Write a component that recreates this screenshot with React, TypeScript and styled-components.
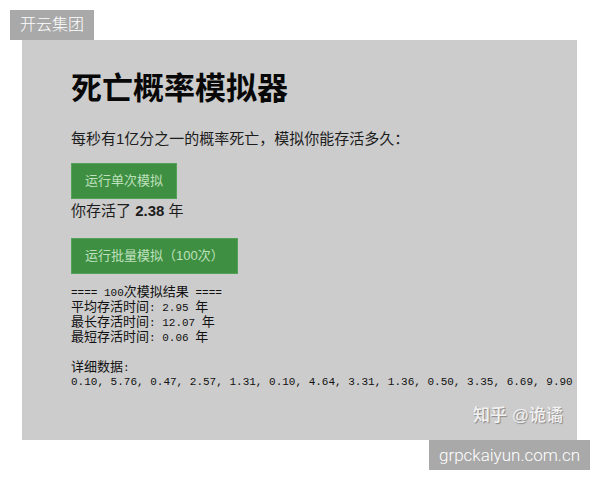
import React from "react";
import styled, { createGlobalStyle } from "styled-components";

const GlobalStyle = createGlobalStyle`
  * { box-sizing: border-box; }
  body {
    margin: 0;
    background: #fff;
    font-family: "Liberation Sans", "Noto Sans CJK SC", sans-serif;
  }
`;

const Page = styled.div`
  position: relative;
  min-height: 100vh;
  padding: 40px 23px 40px 22px;
`;

const Panel = styled.main`
  display: flex;
  flex-direction: column;
  align-items: flex-start;
  padding: 27px 0 12px 49px;
  overflow: hidden;
  background: #ccc;
  color: #1c1c1c;
`;

const Title = styled.h1`
  margin: 0 0 16px;
  color: #080808;
  font-size: 31px;
  line-height: 44px;
`;

const Text = styled.p<{ $gap: number }>`
  margin: 0 0 ${({ $gap }) => $gap}px;
  font-size: 15px;
  line-height: 24px;
`;

const RunButton = styled.button`
  padding: 0 13px;
  border: 1px solid #54a158;
  background: #3e8f42;
  color: #bfe0bd;
  font-family: inherit;
  font-size: 13px;
  line-height: 34px;
  cursor: pointer;
`;

const Report = styled.pre`
  align-self: stretch;
  margin: 11px 0 14px;
  overflow: hidden;
  color: #111;
  font-family: "Liberation Mono", "Noto Sans CJK SC", monospace;
  font-size: 11px;
`;

const Line = styled.div`
  height: 15px;
  line-height: 15px;
`;

const Han = styled.span`
  font-size: 13px;
`;

const Credit = styled.footer`
  align-self: flex-end;
  margin-right: 14px;
  color: #f2f2f2;
  font-size: 17px;
  font-weight: 500;
  line-height: 24px;
  text-shadow: 1px 1px 1px #888;
`;

const Tag = styled.div`
  position: absolute;
  padding: 0 10px;
  background: #a9a9a9;
  color: #fff;
  font-family: Roboto, "Noto Sans CJK SC", sans-serif;
  font-weight: 300;
  line-height: 30px;
`;

const BrandTag = styled(Tag)`
  top: 10px;
  left: 10px;
  font-size: 16px;
`;

const SiteTag = styled(Tag)`
  right: 10px;
  bottom: 10px;
  font-size: 17px;
`;

const stats = [
  { label: "平均存活时间", value: "2.95" },
  { label: "最长存活时间", value: "12.07" },
  { label: "最短存活时间", value: "0.06" },
];

const samples = [
  "0.10", "5.76", "0.47", "2.57", "1.31", "0.10", "4.64",
  "3.31", "1.36", "0.50", "3.35", "6.69", "9.90",
];

export default function App() {
  return (
    <>
      <GlobalStyle />
      <Page>
        <Panel>
          <Title>死亡概率模拟器</Title>
          <Text $gap={12}>每秒有1亿分之一的概率死亡，模拟你能存活多久：</Text>
          <RunButton type="button">运行单次模拟</RunButton>
          <Text $gap={15}>
            你存活了 <strong>2.38</strong> 年
          </Text>
          <RunButton type="button">运行批量模拟（100次）</RunButton>
          <Report>
            <Line>==== 100<Han>次模拟结果</Han> ====</Line>
            {stats.map(({ label, value }) => (
              <Line key={label}>
                <Han>{label}</Han>: {value} <Han>年</Han>
              </Line>
            ))}
            <Line />
            <Line><Han>详细数据</Han>:</Line>
            <Line>{samples.join(", ")}</Line>
          </Report>
          <Credit>知乎 @诡谲</Credit>
        </Panel>
        <BrandTag>开云集团</BrandTag>
        <SiteTag>grpckaiyun.com.cn</SiteTag>
      </Page>
    </>
  );
}
